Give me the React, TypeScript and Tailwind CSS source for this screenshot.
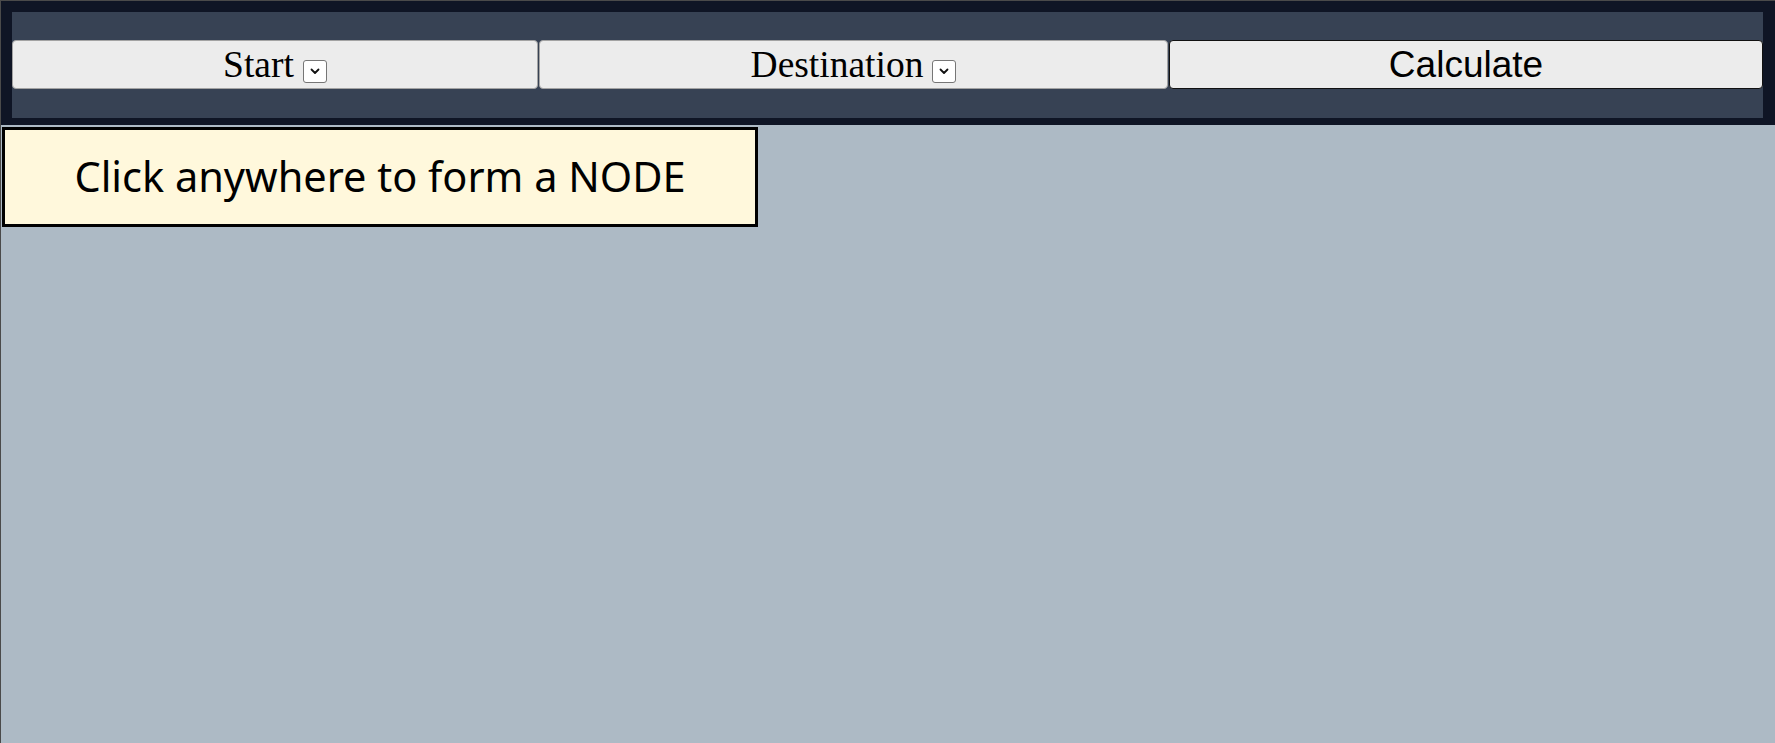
import React from "react";

function SelectBox() {
  return (
    <span className="mt-[14px] ml-[9px] flex h-[23px] w-[24px] items-center justify-center rounded-[3px] border border-[#767676] bg-white">
      <svg width="10" height="7" viewBox="0 0 10 7" fill="none">
        <path d="M1.5 1.5 L5 5 L8.5 1.5" stroke="#111" strokeWidth="1.8" strokeLinecap="round" strokeLinejoin="round" />
      </svg>
    </span>
  );
}

export default function App() {
  return (
    <div className="flex h-[743px] flex-col overflow-hidden border-l border-t border-[#4a4a4a] bg-[#adbac5]">
      <div className="border-b-[7px] border-l-[11px] border-r-[12px] border-t-[11px] border-[#0f1525] bg-[#374254] pb-[29px] pt-[28px]">
        <div className="flex h-[49px]">
          <div className="flex w-[526px] items-center justify-center rounded-[4px] border border-[#a3a3a3] bg-[#ececec] font-['Liberation_Serif',serif] text-[37.5px] leading-none text-black">
            <span>Start</span>
            <SelectBox />
          </div>
          <div className="ml-[1px] flex w-[629px] items-center justify-center rounded-[4px] border border-[#a3a3a3] bg-[#ececec] font-['Liberation_Serif',serif] text-[37.5px] leading-none text-black">
            <span>Destination</span>
            <SelectBox />
          </div>
          <button className="ml-[1px] flex flex-1 items-center justify-center rounded-[4px] border border-[#111] bg-[#ececec] font-['Liberation_Sans',Arial,sans-serif] text-[37px] leading-none text-black">
            Calculate
          </button>
        </div>
      </div>
      <div className="flex-1 pl-[1px] pt-[2px]">
        <div className="flex h-[100px] w-[756px] items-center justify-center border-[3px] border-black bg-[#fff8dc] pb-[2px] font-['Noto_Sans',sans-serif] text-[41.5px] text-black">
          Click anywhere to form a NODE
        </div>
      </div>
    </div>
  );
}
